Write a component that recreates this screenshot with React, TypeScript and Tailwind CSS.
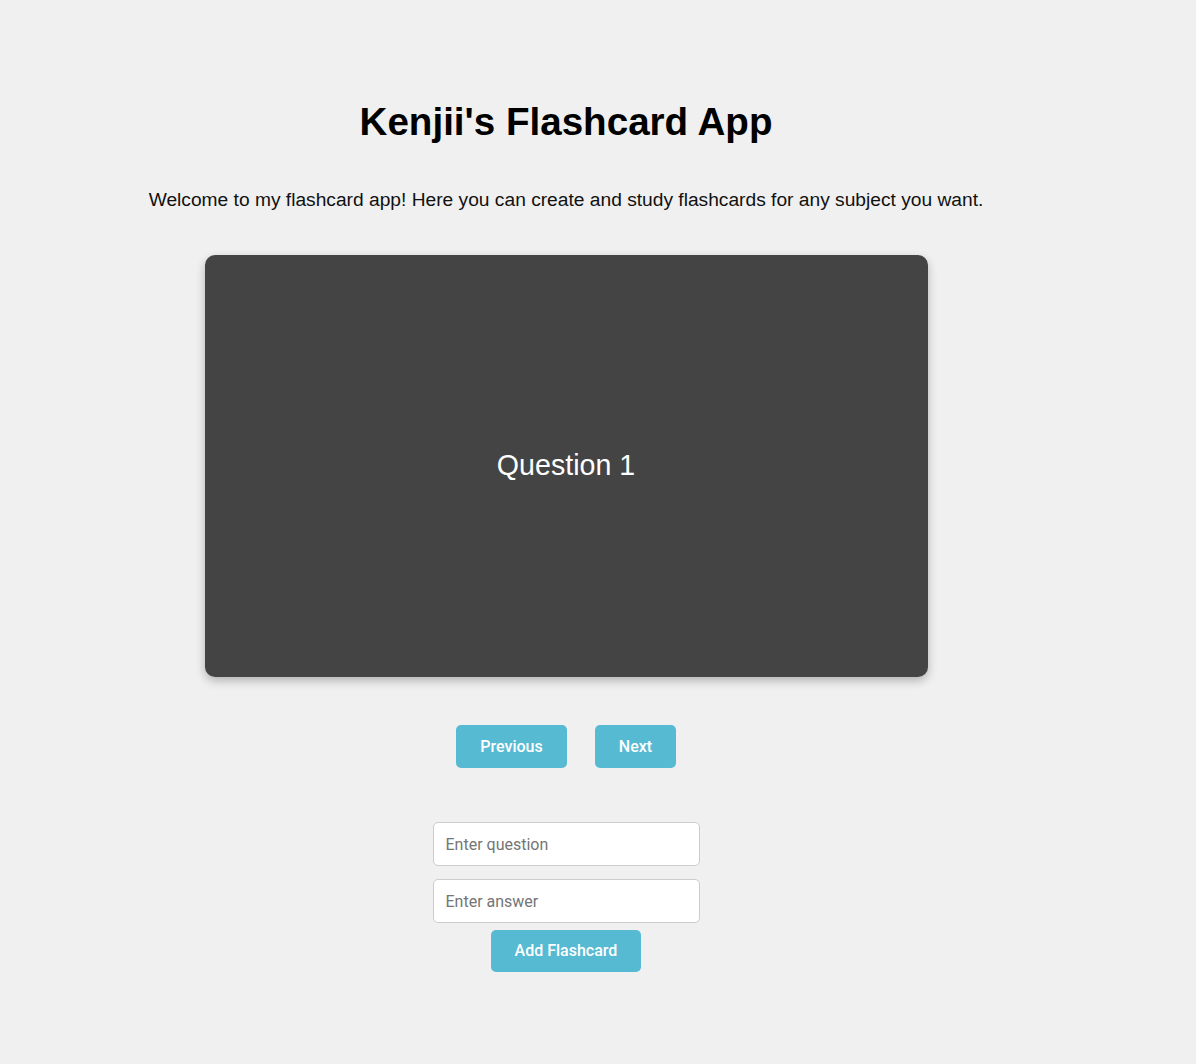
import React, { useState } from "react";

export default function App() {
  const [cards] = useState([{ q: "Question 1", a: "Answer 1" }]);
  const [i] = useState(0);
  return (
    <div className="min-h-[1064px] w-full bg-[#f0f0f0] font-['Liberation_Sans',Arial,sans-serif]">
      <div className="flex w-[1132px] flex-col items-center">
        <h1 className="mt-[98px] text-[38.6px] font-bold leading-[48px] text-black">Kenjii's Flashcard App</h1>
        <p className="mt-[42px] text-[19.2px] leading-[23px] text-[#111]">
          Welcome to my flashcard app! Here you can create and study flashcards for any subject you want.
        </p>
        <div className="mt-[44px] flex h-[422px] w-[723px] items-center justify-center rounded-[10px] bg-[#444444] shadow-[0_4px_10px_rgba(0,0,0,0.25)]">
          <span className="pb-[1px] text-[28.6px] text-white">{cards[i].q}</span>
        </div>
        <div className="mt-[48px] flex gap-[28px] font-['Roboto',sans-serif]">
          <button className="h-[43px] w-[111px] rounded-[5px] bg-[#57bad3] text-[16px] font-medium text-white">Previous</button>
          <button className="h-[43px] w-[81px] rounded-[5px] bg-[#57bad3] text-[16px] font-medium text-white">Next</button>
        </div>
        <div className="mt-[54px] flex flex-col items-center font-['Roboto',sans-serif]">
          <input
            placeholder="Enter question"
            className="h-[44px] w-[267px] rounded-[5px] border border-[#cccccc] bg-white px-[12px] text-[16px] placeholder:text-[#757575] outline-none"
          />
          <input
            placeholder="Enter answer"
            className="mt-[13px] h-[44px] w-[267px] rounded-[5px] border border-[#cccccc] bg-white px-[12px] text-[16px] placeholder:text-[#757575] outline-none"
          />
          <button className="mt-[7px] h-[42px] w-[150px] rounded-[5px] bg-[#57bad3] text-[16px] font-medium text-white">Add Flashcard</button>
        </div>
      </div>
    </div>
  );
}
